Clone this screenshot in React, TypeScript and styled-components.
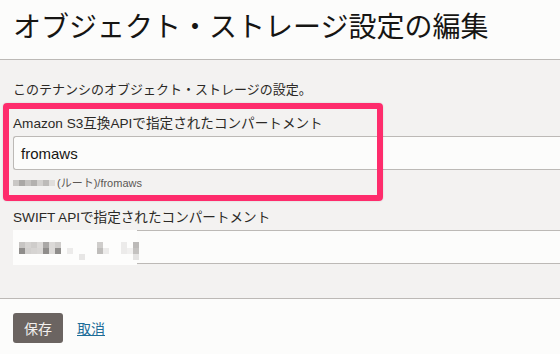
import React from 'react';
import styled, { createGlobalStyle } from 'styled-components';

const GlobalStyle = createGlobalStyle`
  html, body {
    margin: 0;
    padding: 0;
    background: #fcfcfb;
  }
  body {
    font-family: 'Liberation Sans', 'Noto Sans CJK JP', sans-serif;
    color: #161513;
  }
`;

const Page = styled.div`
  width: 560px;
  height: 354px;
  overflow: hidden;
  display: flex;
  flex-direction: column;
`;

const Header = styled.div`
  height: 60px;
  padding: 8px 13px 0;
  box-sizing: border-box;
  background: #fcfcfb;
  border-bottom: 1px solid #bcb9b6;
`;

const Title = styled.h1`
  margin: 0;
  font-family: 'Noto Sans CJK JP', sans-serif;
  font-weight: 400;
  font-size: 28px;
  line-height: 34px;
  color: #161513;
  white-space: nowrap;
`;

const Body = styled.div`
  height: 238px;
  background: #f3f2f1;
  padding: 19px 0 0 13px;
  box-sizing: border-box;
  display: flex;
  flex-direction: column;
`;

const Description = styled.p`
  margin: 0 0 16px;
  font-family: 'Noto Sans CJK JP', sans-serif;
  font-size: 13px;
  line-height: 20px;
  color: #2b2926;
`;

const Field = styled.div<{ $gap?: number }>`
  position: relative;
  display: flex;
  flex-direction: column;
  margin-bottom: ${(p) => p.$gap ?? 0}px;
`;

const Label = styled.label`
  font-size: 13.6px;
  line-height: 18px;
  color: #2b2926;
  margin-bottom: 3px;
  white-space: nowrap;
`;

const Input = styled.div`
  position: relative;
  width: 640px;
  height: 34px;
  box-sizing: border-box;
  background: #fcfcfb;
  border: 1px solid #bcb9b6;
  border-right: none;
  border-radius: 3px 0 0 3px;
  padding: 0 7px;
  display: flex;
  align-items: center;
  font-size: 15px;
  color: #161513;
`;

const Helper = styled.div`
  margin-top: 5px;
  display: flex;
  align-items: center;
  font-size: 11px;
  line-height: 16px;
  color: #5b5754;
`;

const Highlight = styled.div`
  position: absolute;
  left: -10px;
  top: -12px;
  width: 380px;
  height: 98px;
  box-sizing: border-box;
  border: 6px solid #fe2c6c;
  border-radius: 4px;
  box-shadow: 0 0 2px rgba(0, 0, 0, 0.15);
  pointer-events: none;
`;

const Mosaic = styled.svg`
  display: block;
  flex: none;
`;

const SwiftMosaic = styled(Mosaic)`
  position: absolute;
  left: -1px;
  top: -1px;
`;

const Footer = styled.div`
  flex: 1;
  background: #fcfcfb;
  border-top: 1px solid #bcb9b6;
  padding: 14px 13px 0;
  display: flex;
  align-items: flex-start;
  gap: 14px;
`;

const SaveButton = styled.button`
  width: 50px;
  height: 30px;
  border: none;
  border-radius: 3px;
  background: #6b6461;
  color: #f2f0ee;
  font-family: 'Noto Sans CJK JP', sans-serif;
  font-size: 14px;
  padding: 0;
`;

const CancelLink = styled.a`
  line-height: 30px;
  font-family: 'Noto Sans CJK JP', sans-serif;
  font-size: 14px;
  color: #1d6d98;
  text-decoration: underline;
`;

// pixelated redaction blocks as they appear in the screenshot
const tenancyBlocks = ['#c9c7c5', '#aaa8a6', '#c4c2c0', '#b3b1af', '#d2d0ce', '#bdbbb9', '#e0dedc'];

const swiftBlocks: [number, number, string][] = [
  [6, 12, '#c7c5c3'], [12, 12, '#d6d4d2'], [18, 12, '#cfcdcb'], [24, 12, '#dcdad8'], [30, 12, '#aaa8a6'],
  [36, 12, '#dbd9d7'], [42, 12, '#cfcdcb'], [84, 12, '#cfcdcb'], [108, 12, '#ecebea'], [120, 12, '#bcbab8'],
  [6, 18, '#8f8d8b'], [12, 18, '#d2d0ce'], [18, 18, '#d6d4d2'], [24, 18, '#d9d7d5'], [30, 18, '#8f8d8b'],
  [36, 18, '#dcdad8'], [42, 18, '#8f8d8b'], [54, 18, '#ecebea'], [84, 18, '#bfbdbb'], [90, 18, '#ecebea'],
  [108, 18, '#ecebea'], [114, 18, '#f1f0ef'], [120, 18, '#c4c2c0'], [66, 24, '#e7e6e5'], [120, 24, '#e4e3e2'],
];

const App = () => {
  return (
    <Page>
      <GlobalStyle />
      <Header>
        <Title>オブジェクト・ストレージ設定の編集</Title>
      </Header>
      <Body>
        <Description>このテナンシのオブジェクト・ストレージの設定。</Description>
        <Field $gap={18}>
          <Label>Amazon S3互換APIで指定されたコンパートメント</Label>
          <Input>fromaws</Input>
          <Helper>
            <Mosaic width="44" height="10" viewBox="0 0 44 10">
              {tenancyBlocks.map((c, i) => (
                <rect key={i} x={i * 6} y={2} width={6} height={6} fill={c} />
              ))}
            </Mosaic>
            (ルート)/fromaws
          </Helper>
          <Highlight />
        </Field>
        <Field>
          <Label>SWIFT APIで指定されたコンパートメント</Label>
          <Input>
            <SwiftMosaic width="136" height="36" viewBox="0 0 136 36">
              <rect x="0" y="0" width="124" height="35" fill="#fdfdfc" />
              {swiftBlocks.map(([x, y, c], i) => (
                <rect key={i} x={x} y={y} width={6} height={6} fill={c} />
              ))}
            </SwiftMosaic>
          </Input>
        </Field>
      </Body>
      <Footer>
        <SaveButton>保存</SaveButton>
        <CancelLink href="#">取消</CancelLink>
      </Footer>
    </Page>
  );
};

export default App;
